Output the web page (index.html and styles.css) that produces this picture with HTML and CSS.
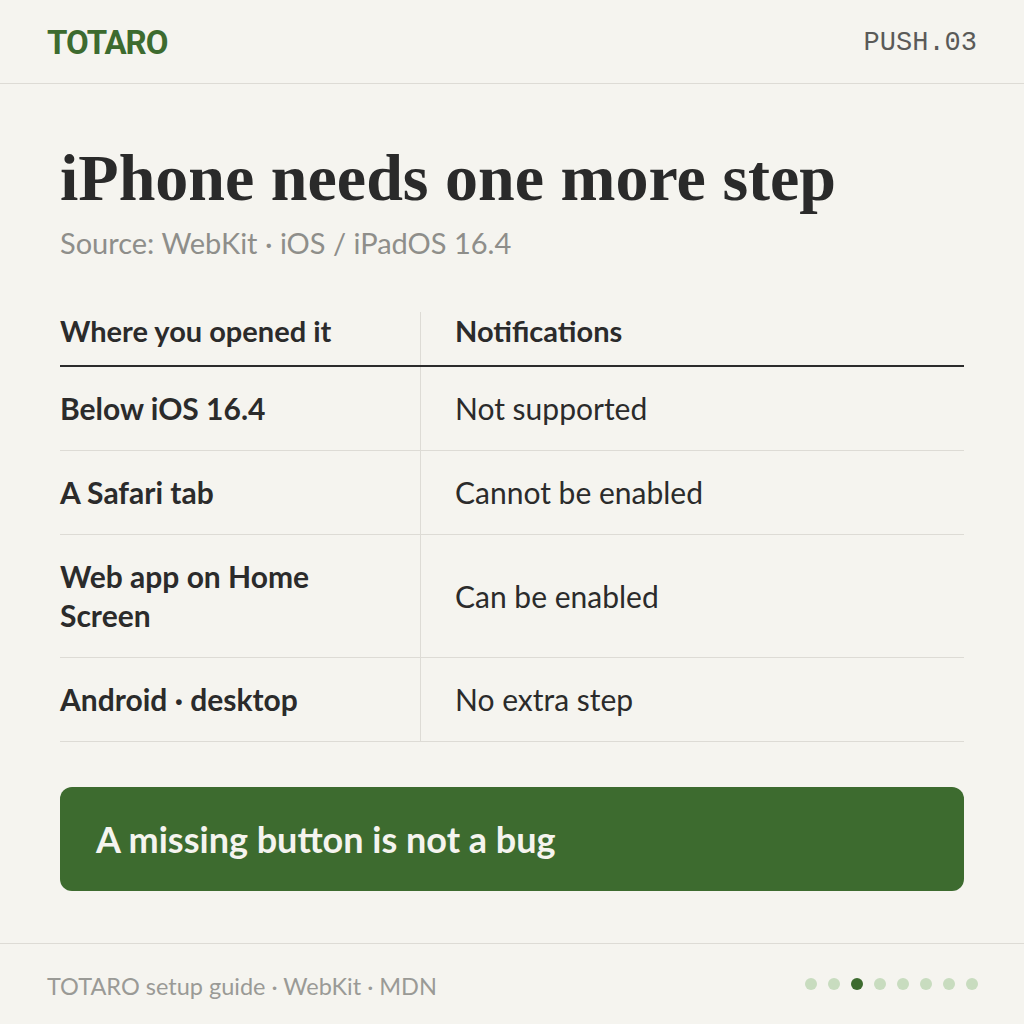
FILE: index.html
```html
<!DOCTYPE html>
<html lang="en">
<head>
<meta charset="utf-8">
<title>TOTARO — iPhone needs one more step</title>
<link rel="stylesheet" href="styles.css">
</head>
<body>
<div class="page">
  <header class="topbar">
    <div class="brand">TOTARO</div>
    <div class="code">PUSH.03</div>
  </header>
  <main class="content">
    <h1 class="title">iPhone needs one more step</h1>
    <p class="source">Source: WebKit · iOS / iPadOS 16.4</p>
    <div class="table">
      <div class="row head">
        <div class="cell c1">Where you opened it</div>
        <div class="cell c2">Notifications</div>
      </div>
      <div class="row">
        <div class="cell c1">Below iOS 16.4</div>
        <div class="cell c2">Not supported</div>
      </div>
      <div class="row">
        <div class="cell c1">A Safari tab</div>
        <div class="cell c2">Cannot be enabled</div>
      </div>
      <div class="row">
        <div class="cell c1">Web app on Home Screen</div>
        <div class="cell c2">Can be enabled</div>
      </div>
      <div class="row">
        <div class="cell c1">Android · desktop</div>
        <div class="cell c2">No extra step</div>
      </div>
    </div>
    <div class="callout">A missing button is not a bug</div>
  </main>
  <footer class="footer">
    <div class="credits">TOTARO setup guide · WebKit · MDN</div>
    <div class="dots">
      <span class="dot"></span><span class="dot"></span><span class="dot on"></span><span class="dot"></span><span class="dot"></span><span class="dot"></span><span class="dot"></span><span class="dot"></span>
    </div>
  </footer>
</div>
</body>
</html>
```
FILE: styles.css
```css
* { box-sizing: border-box; }
html, body { margin: 0; padding: 0; }
body {
  background: #f5f4ef;
  font-family: "Lato", "Noto Sans", sans-serif;
  color: #2b2b2b;
}
.page {
  width: 1024px;
  height: 1024px;
  display: flex;
  flex-direction: column;
}
.topbar {
  height: 84px;
  padding: 0 47px;
  display: flex;
  align-items: center;
  justify-content: space-between;
  border-bottom: 1px solid #dddbd5;
}
.brand {
  font-family: "Roboto", "Liberation Sans", sans-serif;
  font-weight: 700;
  font-size: 33px;
  color: #3d6b2f;
  letter-spacing: -1px;
  padding-top: 2px;
}
.code {
  font-family: "Liberation Mono", "DejaVu Sans Mono", monospace;
  font-size: 27px;
  color: #5a5a58;
  padding-top: 2px;
}
.content {
  padding: 56px 60px 0;
}
.title {
  margin: 0;
  font-family: "Liberation Serif", "DejaVu Serif", serif;
  font-weight: 700;
  font-size: 66px;
  line-height: 76px;
  color: #2a2a2a;
}
.source {
  margin: 9px 0 0;
  font-size: 29px;
  line-height: 36px;
  color: #8e8e8a;
}
.table {
  margin-top: 51px;
}
.row {
  display: grid;
  grid-template-columns: 361px 1fr;
  border-bottom: 1px solid #dddbd5;
}
.row.head {
  border-bottom: 2px solid #2b2b2b;
}
.cell {
  display: flex;
  align-items: center;
  font-size: 30px;
  line-height: 39px;
  padding: 22px 0;
}
.cell.c1 {
  font-weight: 700;
  border-right: 1px solid #dddbd5;
  padding-right: 30px;
}
.cell.c2 {
  padding-left: 34px;
}
.head .cell {
  font-size: 29px;
  font-weight: 700;
  line-height: 36px;
  padding: 1px 0 16px;
}
.head .cell.c2 { padding-left: 34px; }
.callout {
  margin-top: 45px;
  height: 104px;
  background: #3d6b2f;
  border-radius: 12px;
  color: #f5f4ef;
  font-weight: 700;
  font-size: 36px;
  display: flex;
  align-items: center;
  padding: 0 36px;
}
.footer {
  margin-top: auto;
  height: 81px;
  border-top: 1px solid #dddbd5;
  padding: 0 46px 0 47px;
  display: flex;
  align-items: center;
  justify-content: space-between;
}
.credits {
  font-size: 23.5px;
  color: #9a9a96;
  padding-top: 3px;
}
.dots {
  display: flex;
  gap: 11px;
}
.dot {
  width: 12px;
  height: 12px;
  border-radius: 50%;
  background: #c8dcbf;
}
.dot.on { background: #3d6b2f; }
```
